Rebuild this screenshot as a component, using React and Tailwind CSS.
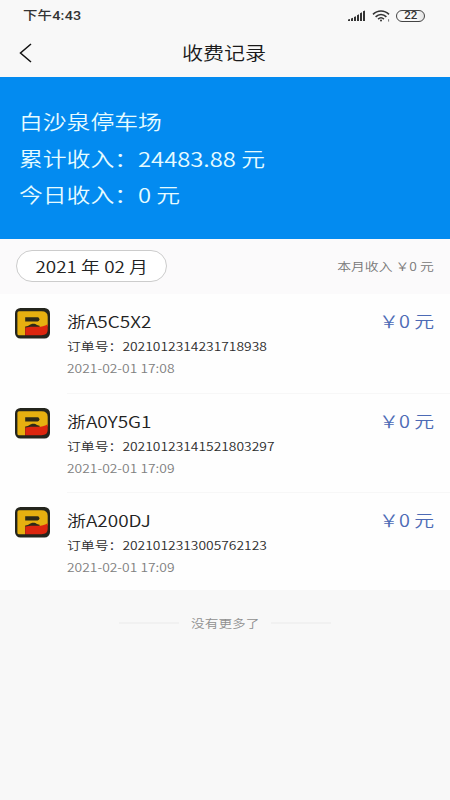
const records = [
  { plate: '浙A5C5X2', order: '2021012314231718938', time: '2021-02-01 17:08' },
  { plate: '浙A0Y5G1', order: '20210123141521803297', time: '2021-02-01 17:09' },
  { plate: '浙A200DJ', order: '2021012313005762123', time: '2021-02-01 17:09' },
];

function StatusBar() {
  return (
    <div className="flex h-8 items-center justify-between pl-[23px] pr-[25px] pt-px text-[#333]">
      <span className="origin-left scale-x-[1.15] font-['Roboto','Noto_Sans_CJK_SC',sans-serif] text-[12.5px] font-medium leading-none tracking-[0.2px]">
        下午4:43
      </span>
      <div className="flex items-center pb-px">
        <svg width="18" height="12" viewBox="0 0 18 12" fill="#333">
          <path d="M0 9.6l2-.5v2H0zM3 8.6l2-.9v3.4H3zM6 7.1l2-.9v4.9H6zM9 5.2l2-.9v6.8H9zM12 3.2l2-.9v8.8h-2zM15 1.3l2-.9v10.7h-2z" />
        </svg>
        <svg className="ml-1.5" width="20" height="12" viewBox="0 0 20 12" fill="none" stroke="#333" strokeWidth="1.6">
          <path d="M1 4.4C5.5-.2 12.5-.2 17 4.4" />
          <path d="M3.6 6.9c3.2-3.1 7.6-3.1 10.8 0" />
          <path d="M6.1 9.1c1.8-1.7 4-1.7 5.8 0" />
          <circle cx="9" cy="10.6" r="1" fill="#333" stroke="none" />
          <path d="M16.6 9.2v2.4" strokeWidth="1" stroke="#777" />
        </svg>
        <div className="ml-1 flex h-3 w-[29px] items-center justify-center rounded-full border border-[#444] bg-linear-to-r from-transparent from-70% to-[#e4e4e4]">
          <span className="scale-x-[1.15] font-['Roboto',sans-serif] text-[10px] font-medium leading-none">22</span>
        </div>
      </div>
    </div>
  );
}

function ParkingLogo() {
  return (
    <svg className="shrink-0" width="35" height="31" viewBox="0 0 35 31">
      <rect width="35" height="30.6" rx="5.5" fill="#24251d" />
      <path d="M4 3.3h22.5q6.2 0 6.2 5.5v9.5L26 20H10v7.3H4q-1.6 0-1.6-1.6V5q0-1.7 1.6-1.7z" fill="#e6b010" />
      <path d="M10.2 9.2H22.6q1.8 0 1.8 2T22.6 13.4H10.2z" fill="#2d2a18" />
      <path d="M10.2 18.5c4.3-.2 4.6-2.7 8-2.7s3.2 1.7 6.4 1.9v2.3H10.2z" fill="#2d2a18" />
      <path d="M10.2 19.8c4-1.4 7.6-1.2 11.3-1 4.2.3 7.4-.6 11.2-2.6v5.9q0 5.2-6.2 5.2H10.2z" fill="#dc260f" />
    </svg>
  );
}

function RecordRow({ record, last }) {
  return (
    <div className={`ml-[15px] flex ${last ? 'h-[97px]' : 'h-[99.5px]'}`}>
      <div className="pt-[14px]">
        <ParkingLogo />
      </div>
      <div className={`ml-[17px] flex flex-1 items-start justify-between pr-4 ${last ? '' : 'border-b border-[#f7f7f7]'}`}>
        <div className="origin-left scale-x-[1.185] whitespace-nowrap pt-[13px]">
          <p className="text-[16px] leading-[28px] text-[#222]">{record.plate}</p>
          <p className="text-[11.7px] leading-[22px] text-[#2c2c2c]">订单号：{record.order}</p>
          <p className="text-[11.7px] leading-[22px] text-[#808080]">{record.time}</p>
        </div>
        <p className="origin-right scale-x-[1.17] whitespace-nowrap pt-[13px] text-[17px] leading-[28px] text-[#4c6ab5]">
          ￥0 元
        </p>
      </div>
    </div>
  );
}

export default function App() {
  return (
    <div className="h-[800px] w-[450px] overflow-hidden bg-[#f8f8f8] font-['Noto_Sans_CJK_SC',sans-serif] font-[350]">
      <StatusBar />
      <header className="grid h-[45px] grid-cols-[1fr_auto_1fr] items-center pb-1.5 pr-0.5">
        <svg className="ml-[19px] mt-0.5" width="14" height="20" viewBox="0 0 14 20" fill="none" stroke="#111" strokeWidth="1.5">
          <path d="M12 1L1.5 10 12 19" />
        </svg>
        <h1 className="scale-x-[1.17] text-[18px] leading-none text-[#1a1a1a]">收费记录</h1>
      </header>

      <section className="h-[162px] bg-[#038bf0] pl-[19px] pt-[27px] text-[20px] leading-[36.5px] text-[#e6fbff]">
        <div className="w-max origin-left scale-x-[1.19]">
          <p>白沙泉停车场</p>
          <p>累计收入：24483.88 元</p>
          <p>今日收入：0 元</p>
        </div>
      </section>

      <div className="flex h-[55px] items-center justify-between bg-[#fbfafb] pb-0.5 pl-4 pr-4">
        <div className="flex h-8 w-[151px] items-center justify-center rounded-full border border-[#ccc] bg-white">
          <span className="scale-x-[1.18] whitespace-nowrap text-[16px] leading-none text-[#222]">2021 年 02 月</span>
        </div>
        <span className="origin-right scale-x-[1.18] text-[11.7px] text-[#777]">本月收入 ￥0 元</span>
      </div>

      <main className="bg-[#fefefe]">
        {records.map((record, i) => (
          <RecordRow key={record.order} record={record} last={i === records.length - 1} />
        ))}
      </main>

      <footer className="flex items-center justify-center pt-[22px]">
        <span className="h-0.5 w-[60px] bg-[#f1f1f1]" />
        <span className="mx-[17px] scale-x-[1.17] text-[11.7px] leading-[22px] text-[#909090]">没有更多了</span>
        <span className="h-0.5 w-[60px] bg-[#f1f1f1]" />
      </footer>
    </div>
  );
}
